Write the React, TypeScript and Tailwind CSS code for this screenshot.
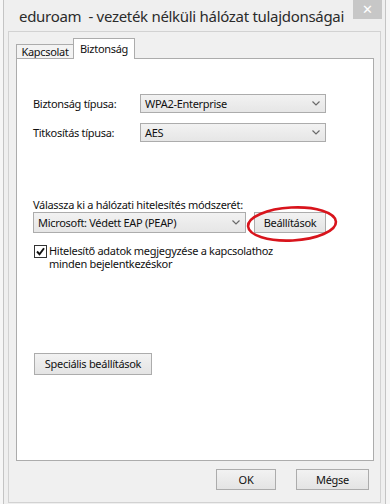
import React from "react";

function Chevron() {
  return (
    <svg width="8" height="5" viewBox="0 0 8 5" className="shrink-0">
      <polyline points="0.5,0.5 4,4 7.5,0.5" fill="none" stroke="#6a6a6a" strokeWidth="1.2" />
    </svg>
  );
}

function Select({ value, className }: { value: string; className: string }) {
  return (
    <div
      className={`flex items-center justify-between border border-[#acacac] bg-gradient-to-b from-[#f2f2f2] to-[#e6e6e6] pl-[4px] pr-[5px] ${className}`}
    >
      <span className="text-[#111]">{value}</span>
      <Chevron />
    </div>
  );
}

function Button({ children, className }: { children: React.ReactNode; className: string }) {
  return (
    <div
      className={`flex items-center justify-center border border-[#acacac] bg-gradient-to-b from-[#f2f2f2] to-[#e4e4e4] text-[#111] ${className}`}
    >
      {children}
    </div>
  );
}

export default function App() {
  return (
    <div className="w-[390px] h-[504px] overflow-hidden bg-[#f6f6f6] pl-[3px] font-['Noto_Sans',sans-serif] text-[11px] leading-[14px] tracking-[-0.3px] text-[#111]">
      <div className="w-[383px] h-[504px] border-x border-[#c4c4c4] bg-[#efefef] flex flex-col">
        {/* title bar */}
        <div className="h-[31px] flex justify-between shrink-0">
          <div className="pl-[15px] pt-[6px] text-[15px] leading-[20px] tracking-[-0.3px] text-[#2b2b2b] whitespace-pre">
            eduroam  - vezeték nélküli hálózat tulajdonságai
          </div>
          <div className="mr-[3px] w-[29px] h-[19px] bg-[#c7c7c7] flex items-center justify-center text-white text-[13px] leading-none">
            ✕
          </div>
        </div>

        {/* client area */}
        <div className="mx-[4px] h-[472px] border border-[#d2d2d2] bg-[#f0f0f0] pl-[7px] pr-[6px] pt-[6px] flex flex-col">
          {/* tabs */}
          <div className="h-[20px] flex items-end">
            <div className="w-[57px] h-[14px] border-l border-t border-[#acacac] bg-[#f3f3f3] flex items-center justify-center">
              Kapcsolat
            </div>
            <div className="relative z-10 -mb-px w-[62px] h-[21px] border-l border-t border-r border-[#acacac] bg-white flex items-start justify-center pt-[3px]">
              Biztonság
            </div>
          </div>

          {/* panel */}
          <div className="h-[403px] border border-[#acacac] bg-white pl-[16px] pt-[35px] flex flex-col">
            <div className="flex items-center h-[19px]">
              <span className="w-[107px]">Biztonság típusa:</span>
              <Select value="WPA2-Enterprise" className="w-[186px] h-[19px]" />
            </div>
            <div className="flex items-center h-[19px] mt-[10px]">
              <span className="w-[107px]">Titkosítás típusa:</span>
              <Select value="AES" className="w-[186px] h-[19px]" />
            </div>

            <div className="mt-[56px]">Válassza ki a hálózati hitelesítés módszerét:</div>
            <div className="flex items-center">
              <Select value="Microsoft: Védett EAP (PEAP)" className="w-[213px] h-[21px]" />
              <div className="relative ml-[8px]">
                <Button className="w-[72px] h-[21px]">Beállítások</Button>
                <svg
                  width="96"
                  height="40"
                  viewBox="0 0 96 40"
                  className="absolute left-[-9px] top-[-7px] pointer-events-none"
                >
                  <ellipse
                    cx="47"
                    cy="19"
                    rx="44"
                    ry="16.5"
                    fill="none"
                    stroke="#d8141c"
                    strokeWidth="2.6"
                    transform="rotate(-3 47 19)"
                  />
                </svg>
              </div>
            </div>

            <div className="flex items-start mt-[11px] ml-px">
              <div className="w-[13px] h-[13px] border border-[#333] bg-white flex items-center justify-center mt-px shrink-0">
                <svg width="9" height="9" viewBox="0 0 9 9">
                  <polyline points="1,4.5 3.5,7.2 8,1.2" fill="none" stroke="#111" strokeWidth="1.9" />
                </svg>
              </div>
              <div className="ml-[2px] leading-[13px]">
                Hitelesítő adatok megjegyzése a kapcsolathoz
                <br />
                minden bejelentkezéskor
              </div>
            </div>

            <Button className="mt-[83px] ml-px w-[118px] h-[22px]">Speciális beállítások</Button>
          </div>

          {/* dialog buttons */}
          <div className="flex justify-end gap-[20px] mt-[8px] mr-[5px]">
            <Button className="w-[60px] h-[21px]">OK</Button>
            <Button className="w-[73px] h-[21px]">Mégse</Button>
          </div>
        </div>
      </div>
    </div>
  );
}
